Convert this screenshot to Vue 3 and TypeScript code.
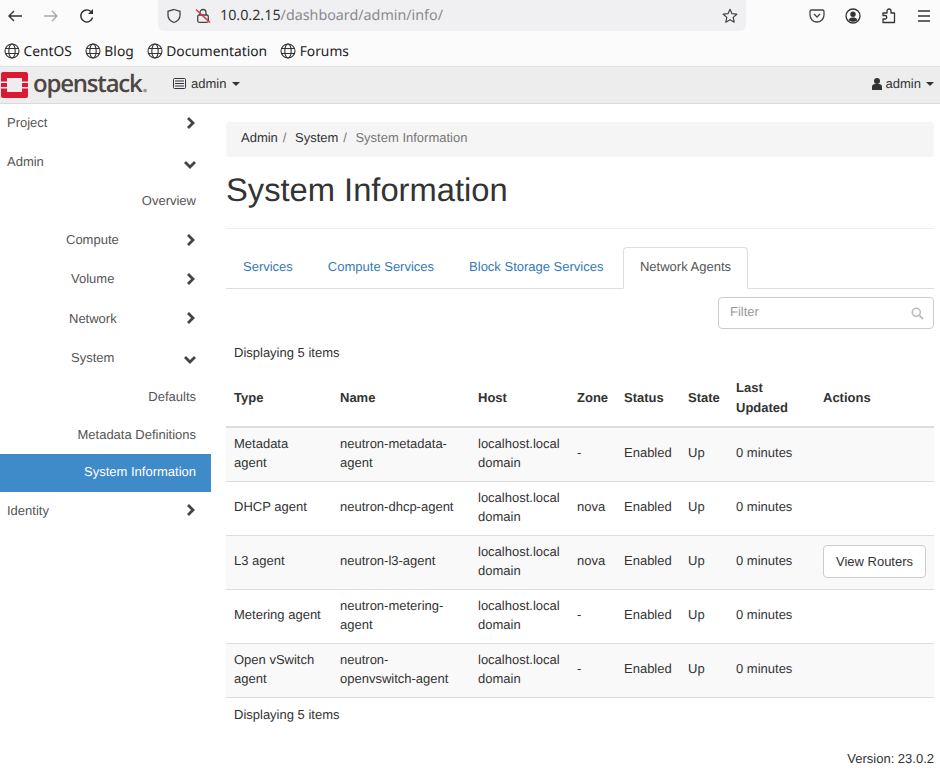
<script setup lang="ts">
interface Row { type: string[]; name: string[]; zone: string; action?: string }
const rows: Row[] = [
  { type: ['Metadata', 'agent'], name: ['neutron-metadata-', 'agent'], zone: '-' },
  { type: ['DHCP agent'], name: ['neutron-dhcp-agent'], zone: 'nova' },
  { type: ['L3 agent'], name: ['neutron-l3-agent'], zone: 'nova', action: 'View Routers' },
  { type: ['Metering agent'], name: ['neutron-metering-', 'agent'], zone: '-' },
  { type: ['Open vSwitch', 'agent'], name: ['neutron-', 'openvswitch-agent'], zone: '-' },
]
const bookmarks = ['CentOS', 'Blog', 'Documentation', 'Forums']
const tabs = ['Services', 'Compute Services', 'Block Storage Services']
</script>

<template>
  <div class="page">
    <div class="toolbar">
      <svg class="tb back" width="16" height="16" viewBox="0 0 16 16"><path d="M15 8H2M7 3L2 8l5 5" fill="none" stroke="#333" stroke-width="1.4"/></svg>
      <svg class="tb fwd" width="16" height="16" viewBox="0 0 16 16"><path d="M1 8h13M9 3l5 5-5 5" fill="none" stroke="#a8a8a8" stroke-width="1.4"/></svg>
      <svg class="tb reload" width="16" height="16" viewBox="0 0 16 16"><path d="M13.6 9.500A6 6 0 1 1 12 3.600" fill="none" stroke="#333" stroke-width="1.4"/><path d="M14 1v5H9z" fill="#333"/></svg>
      <div class="urlbar">
        <svg width="16" height="16" viewBox="0 0 16 16"><path d="M8 1.500l6 1.800v4c0 3.600-2.600 6-6 7.200-3.400-1.200-6-3.600-6-7.200v-4z" fill="none" stroke="#444" stroke-width="1.300"/></svg>
        <svg class="lock" width="16" height="16" viewBox="0 0 16 16"><path d="M5 7V4.500a3 3 0 0 1 6 0V7" fill="none" stroke="#444" stroke-width="1.300"/><rect x="2.700" y="7" width="10.600" height="7.300" rx="1.500" fill="none" stroke="#444" stroke-width="1.300"/><path d="M1 1.500l14 13" stroke="#e22850" stroke-width="1.400"/></svg>
        <span class="url"><span class="host">10.0.2.15</span>/dashboard/admin/info/</span>
        <svg class="star" width="16" height="16" viewBox="0 0 16 16"><path d="M8 1.300l2 4.400 4.800.5-3.600 3.200 1 4.800L8 11.800l-4.200 2.400 1-4.800L1.200 6.200 6 5.700z" fill="none" stroke="#444" stroke-width="1.200" stroke-linejoin="round"/></svg>
      </div>
      <div class="tools">
        <svg width="16" height="16" viewBox="0 0 16 16"><path d="M2.500 2h11A1.500 1.500 0 0 1 15 3.500V7a7 7 0 0 1-14 0V3.500A1.500 1.500 0 0 1 2.500 2z" fill="none" stroke="#444" stroke-width="1.300"/><path d="M5 6l3 3 3-3" fill="none" stroke="#444" stroke-width="1.300"/></svg>
        <svg width="16" height="16" viewBox="0 0 16 16"><circle cx="8" cy="8" r="7" fill="none" stroke="#333" stroke-width="1.300"/><circle cx="8" cy="6.300" r="2.700" fill="#333"/><path d="M3.500 12c1-2 2.500-2.500 4.500-2.500s3.500.5 4.500 2.500c-1 1.200-2.500 1.800-4.500 1.800s-3.500-.6-4.500-1.800z" fill="#333"/></svg>
        <svg width="16" height="16" viewBox="0 0 16 16"><path d="M2 5h4V3a2 2 0 0 1 4 0v2h3.500v9.500H2V11h2a1.700 1.700 0 0 0 0-3.500H2z" fill="none" stroke="#333" stroke-width="1.300" stroke-linejoin="round"/></svg>
        <svg width="14" height="16" viewBox="0 0 14 16"><path d="M1 3h12M1 8h12M1 13h12" stroke="#333" stroke-width="1.300"/></svg>
      </div>
    </div>

    <div class="bookmarks">
      <span v-for="b in bookmarks" :key="b" class="bookmark">
        <svg width="16" height="16" viewBox="0 0 16 16" fill="none" stroke="#333" stroke-width="1.100"><circle cx="8" cy="8" r="7"/><ellipse cx="8" cy="8" rx="3.200" ry="7"/><path d="M1.500 5.500h13M1.500 10.500h13"/></svg>
        {{ b }}
      </span>
    </div>

    <nav class="navbar">
      <div class="brand">
        <svg class="logo" width="27" height="26" viewBox="0 0 27 26"><path d="M2 0h23a2 2 0 0 1 2 2v7.500h-6V6H6v3.500H0V2a2 2 0 0 1 2-2zM0 16.500h6V20h15v-3.500h6V24a2 2 0 0 1-2 2H2a2 2 0 0 1-2-2z" fill="#da1a32"/><path d="M0 11h6v4H0zM21 11h6v4h-6z" fill="#da1a32"/></svg>
        <span class="logotext">openstack<span class="dot">.</span></span>
      </div>
      <div class="project">
        <svg width="13" height="11" viewBox="0 0 13 11"><rect x=".5" y=".5" width="12" height="10" rx="1" fill="none" stroke="#333"/><path d="M2 3h9M2 5.500h9M2 8h9" stroke="#333" stroke-width="1.200"/></svg>
        admin <i class="caret"></i>
      </div>
      <div class="user">
        <svg width="10" height="12" viewBox="0 0 10 12"><circle cx="5" cy="3" r="3" fill="#333"/><path d="M0 12V8.500C0 7 1.500 6 3 6h4c1.500 0 3 1 3 2.500V12z" fill="#333"/></svg>
        admin <i class="caret"></i>
      </div>
    </nav>

    <div class="body">
      <aside class="sidebar">
        <div class="item top">Project<svg class="chev" viewBox="0 0 10 14"><path d="M2 2l5 5-5 5" /></svg></div>
        <div class="item top">Admin<svg class="chev down" viewBox="0 0 14 10"><path d="M2 2l5 5 5-5" /></svg></div>
        <div class="item sub end">Overview</div>
        <div class="item lvl2"><span class="l2 c">Compute</span><svg class="chev" viewBox="0 0 10 14"><path d="M2 2l5 5-5 5" /></svg></div>
        <div class="item lvl2"><span class="l2 v">Volume</span><svg class="chev" viewBox="0 0 10 14"><path d="M2 2l5 5-5 5" /></svg></div>
        <div class="item lvl2"><span class="l2 n">Network</span><svg class="chev" viewBox="0 0 10 14"><path d="M2 2l5 5-5 5" /></svg></div>
        <div class="item lvl2"><span class="l2 v">System</span><svg class="chev down" viewBox="0 0 14 10"><path d="M2 2l5 5 5-5" /></svg></div>
        <div class="item sub end">Defaults</div>
        <div class="item sub meta end">Metadata Definitions</div>
        <div class="item sub short end active">System Information</div>
        <div class="item top ident">Identity<svg class="chev" viewBox="0 0 10 14"><path d="M2 2l5 5-5 5" /></svg></div>
      </aside>

      <main class="main">
        <div class="breadcrumb">
          <span>Admin</span><span class="sep">/</span><span>System</span><span class="sep">/</span><span class="cur">System Information</span>
        </div>
        <h1 class="title">System Information</h1>
        <div class="tabs">
          <a v-for="t in tabs" :key="t" class="tab">{{ t }}</a>
          <a class="tab active">Network Agents</a>
        </div>
        <div class="filter-row">
          <div class="filter">
            <span>Filter</span>
            <svg width="13" height="13" viewBox="0 0 13 13"><circle cx="5.300" cy="5.300" r="4" fill="none" stroke="#bbb" stroke-width="1.600"/><path d="M8.300 8.300l3.700 3.700" stroke="#bbb" stroke-width="1.800"/></svg>
          </div>
        </div>
        <div class="count top-count">Displaying 5 items</div>
        <table class="table">
          <colgroup>
            <col class="c1"><col class="c2"><col class="c3"><col class="c4"><col class="c5"><col class="c6"><col class="c7"><col class="c8">
          </colgroup>
          <thead>
            <tr><th>Type</th><th>Name</th><th>Host</th><th>Zone</th><th>Status</th><th>State</th><th>Last<br>Updated</th><th>Actions</th></tr>
          </thead>
          <tbody>
            <tr v-for="r in rows" :key="r.name.join('')">
              <td><template v-for="(l, i) in r.type" :key="i"><br v-if="i">{{ l }}</template></td>
              <td><template v-for="(l, i) in r.name" :key="i"><br v-if="i">{{ l }}</template></td>
              <td>localhost.local<br>domain</td>
              <td>{{ r.zone }}</td>
              <td>Enabled</td>
              <td>Up</td>
              <td>0 minutes</td>
              <td class="act"><button v-if="r.action" class="btn">{{ r.action }}</button></td>
            </tr>
          </tbody>
        </table>
        <div class="count bottom-count">Displaying 5 items</div>
        <div class="version">Version: 23.0.2</div>
      </main>
    </div>
  </div>
</template>

<style>
html, body { margin: 0; background: #fff; }
</style>

<style scoped>
.page { width: 940px; height: 777px; overflow: hidden; font-family: "Liberation Sans", Arial, sans-serif; font-size: 13px; color: #333; line-height: 19px; text-rendering: geometricPrecision; }
.toolbar { height: 31px; padding-bottom: 2px; display: flex; align-items: center; background: #fbfbfc; }
.tb { flex: none; }
.back { margin-left: 7px; }
.fwd { margin-left: 20px; }
.reload { margin-left: 20px; }
.urlbar { margin-left: 63px; width: 588px; height: 31px; background: #f0f0f2; border-radius: 0 0 6px 6px; display: flex; align-items: center; padding-left: 8px; box-sizing: border-box; flex: none; font-family: "Noto Sans", sans-serif; }
.lock { margin-left: 13px; }
.url { margin-left: 9px; font-size: 14.3px; color: #8a8a8e; }
.host { color: #333; }
.star { margin-left: auto; margin-right: 8px; }
.tools { display: flex; gap: 20px; margin-left: 63px; align-items: center; }
.bookmarks { height: 30px; padding-top: 3px; background: #fbfbfc; display: flex; align-items: center; font-family: "Noto Sans", sans-serif; font-size: 13.8px; color: #222; padding-left: 4px; gap: 13px; border-bottom: 1px solid #e0e0e0; }
.bookmark { display: flex; align-items: center; gap: 3.500px; }
.navbar { height: 33px; padding-bottom: 3px; background: #ededed; border-bottom: 1px solid #d9d9d9; display: flex; align-items: center; }
.brand { display: flex; align-items: center; width: 173px; flex: none; padding-left: 1px; box-sizing: border-box; }
.logo { margin-top: 3px; flex: none; }
.logotext { font-family: "Open Sans", sans-serif; font-weight: 600; font-size: 24px; color: #4e4743; letter-spacing: -1.200px; margin-left: 5px; line-height: 30px; }
.dot { color: #999; }
.project { display: flex; align-items: center; gap: 5px; }
.user { margin-left: auto; margin-right: 6px; display: flex; align-items: center; gap: 4px; }
.caret { display: inline-block; border: 4px solid transparent; border-top-color: #333; border-bottom: 0; margin-left: 1px; }
.body { display: flex; }
.sidebar { width: 211px; flex: none; margin-top: -1px; }
.item { display: flex; align-items: center; height: 39.100px; box-sizing: border-box; color: #555; padding-right: 15px; }
.top { padding-left: 7px; justify-content: space-between; }
.end { justify-content: flex-end; }
.lvl2 { justify-content: space-between; }
.l2.c { margin-left: 66px; }
.l2.v { margin-left: 71px; }
.l2.n { margin-left: 69px; }
.meta { height: 38.200px; padding-bottom: 1px; }
.short { height: 37.900px; padding-bottom: 3px; }
.active { background: #3f8ac9; color: #fff; }
.ident { padding-bottom: 2px; }
.chev { width: 10px; height: 14px; fill: none; stroke: #444; stroke-width: 2.800; }
.chev.down { width: 14px; height: 10px; margin-right: -1px; margin-top: 6px; }
.main { width: 708px; margin-left: 15px; padding-top: 18px; flex: none; }
.breadcrumb { height: 35px; padding: 0 0 5px 15px; box-sizing: border-box; background: #f5f5f5; border-radius: 4px; display: flex; align-items: center; }
.sep { color: #777; padding: 0 8.500px 0 5px; }
.cur { color: #777; }
.title { font-size: 32.700px; font-weight: 400; margin: 0; line-height: 36px; padding: 15px 0 20px; border-bottom: 1px solid #eee; color: #333; height: 36px; }
.tabs { display: flex; margin-top: 18px; height: 42px; box-sizing: border-box; border-bottom: 1px solid #ddd; padding-left: 1px; }
.tab { color: #337ab7; padding: 0 16px 3px; margin-right: 3px; display: flex; align-items: center; box-sizing: border-box; height: 42px; }
.tab.active { color: #555; padding: 0 15.500px 3px; border: 1px solid #ddd; border-bottom-color: #fff; border-radius: 4px 4px 0 0; background: #fff; margin-left: 1px; }
.filter-row { display: flex; justify-content: flex-end; margin-top: 8px; }
.filter { width: 216px; height: 32px; box-sizing: border-box; border: 1px solid #ccc; border-radius: 4px; display: flex; align-items: center; justify-content: space-between; padding: 0 9px 0 11px; color: #999; }
.filter span { margin-top: -4px; }
.filter svg { margin-top: 1px; }
.count { padding-left: 8px; }
.top-count { margin-top: 14px; height: 19px; }
.table { border-collapse: collapse; table-layout: fixed; width: 708px; margin-top: 6px; }
.c1 { width: 106px; } .c2 { width: 138px; } .c3 { width: 99px; } .c4 { width: 47px; } .c5 { width: 64px; } .c6 { width: 48px; } .c7 { width: 87px; } .c8 { width: 119px; }
th { text-align: left; padding: 1px 8px 0; height: 59px; box-sizing: border-box; border-bottom: 2px solid #ddd; vertical-align: middle; font-weight: 700; line-height: 20px; overflow: hidden; color: #333; }
td { padding: 0 8px 3px; height: 54px; box-sizing: border-box; border-bottom: 1px solid #ddd; vertical-align: middle; white-space: nowrap; }
tbody tr:nth-child(odd) { background: #f9f9f9; }
td.act { padding-bottom: 2px; }
.btn { font: inherit; height: 33px; width: 103px; padding: 0; background: #fff; border: 1px solid #ccc; border-radius: 4px; color: #333; display: block; }
.bottom-count { margin-top: 7px; }
.version { text-align: right; margin-top: 25px; }
</style>
